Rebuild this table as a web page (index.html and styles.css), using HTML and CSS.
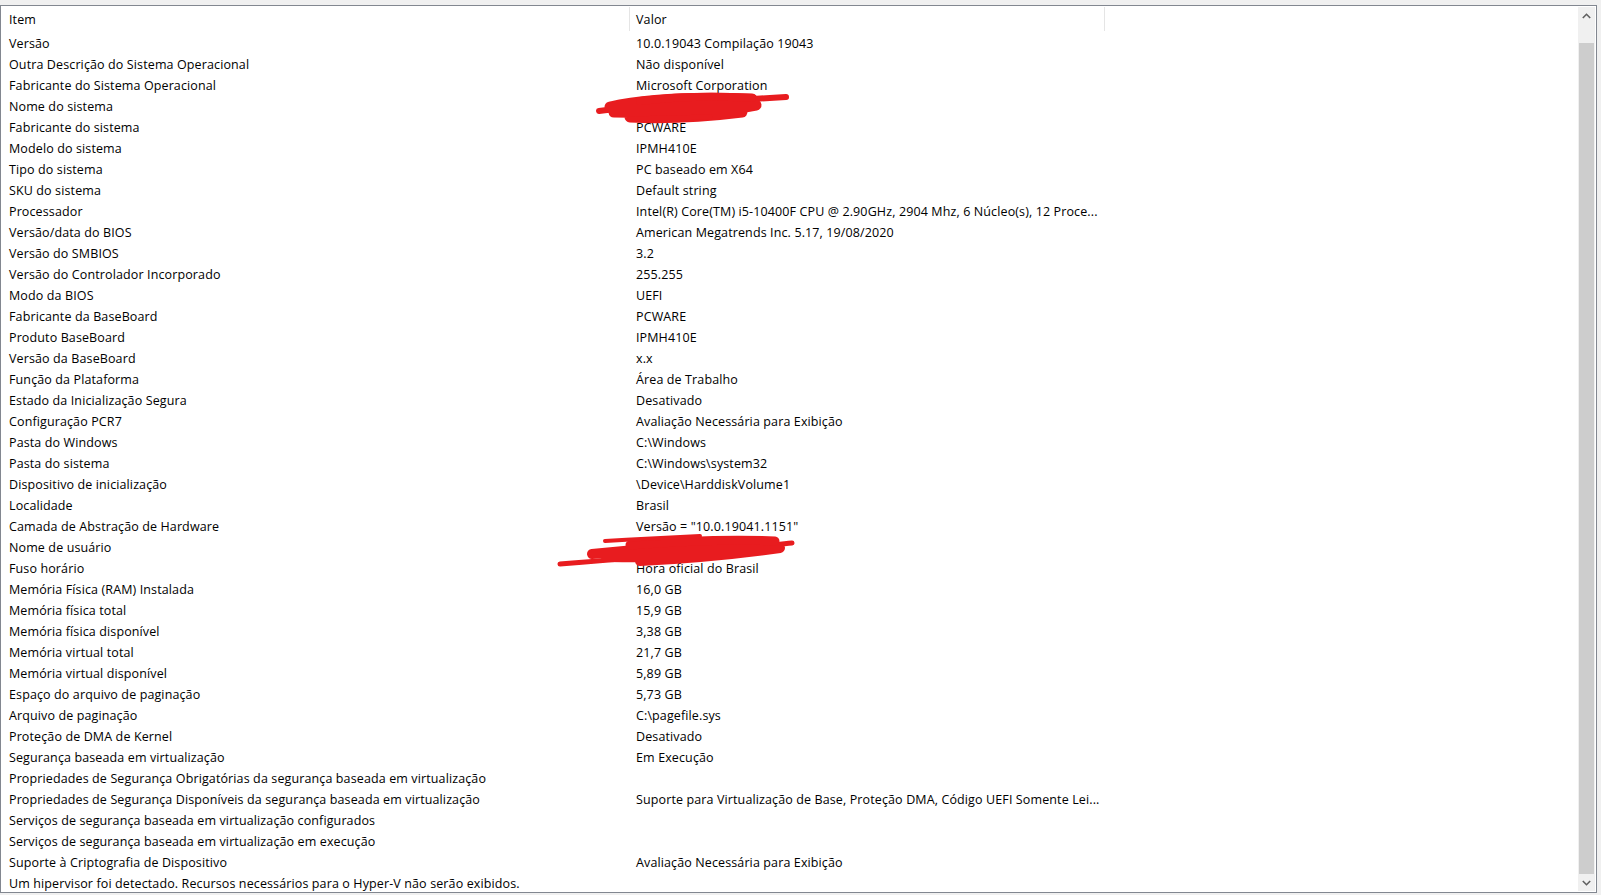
FILE: index.html
```html
<!DOCTYPE html>
<html lang="pt-BR">
<head>
    <meta charset="UTF-8">
    <meta name="viewport" content="width=device-width, initial-scale=1.0">
    <title>Informações do Sistema</title>
    <link rel="stylesheet" href="styles.css">
</head>
<body>
  <div class="window">
    <div class="list">
      <div class="row head">
        <span class="cell">Item</span>
        <span class="cell">Valor</span>
        <span class="cell"></span>
      </div>
      <div class="row"><span class="cell">Versão</span><span class="cell">10.0.19043 Compilação 19043</span></div>
      <div class="row"><span class="cell">Outra Descrição do Sistema Operacional</span><span class="cell">Não disponível</span></div>
      <div class="row"><span class="cell">Fabricante do Sistema Operacional</span><span class="cell">Microsoft Corporation</span></div>
      <div class="row"><span class="cell">Nome do sistema</span><span class="cell"></span></div>
      <div class="row"><span class="cell">Fabricante do sistema</span><span class="cell">PCWARE</span></div>
      <div class="row"><span class="cell">Modelo do sistema</span><span class="cell">IPMH410E</span></div>
      <div class="row"><span class="cell">Tipo do sistema</span><span class="cell">PC baseado em X64</span></div>
      <div class="row"><span class="cell">SKU do sistema</span><span class="cell">Default string</span></div>
      <div class="row"><span class="cell">Processador</span><span class="cell">Intel(R) Core(TM) i5-10400F CPU @ 2.90GHz, 2904 Mhz, 6 Núcleo(s), 12 Proce...</span></div>
      <div class="row"><span class="cell">Versão/data do BIOS</span><span class="cell">American Megatrends Inc. 5.17, 19/08/2020</span></div>
      <div class="row"><span class="cell">Versão do SMBIOS</span><span class="cell">3.2</span></div>
      <div class="row"><span class="cell">Versão do Controlador Incorporado</span><span class="cell">255.255</span></div>
      <div class="row"><span class="cell">Modo da BIOS</span><span class="cell">UEFI</span></div>
      <div class="row"><span class="cell">Fabricante da BaseBoard</span><span class="cell">PCWARE</span></div>
      <div class="row"><span class="cell">Produto BaseBoard</span><span class="cell">IPMH410E</span></div>
      <div class="row"><span class="cell">Versão da BaseBoard</span><span class="cell">x.x</span></div>
      <div class="row"><span class="cell">Função da Plataforma</span><span class="cell">Área de Trabalho</span></div>
      <div class="row"><span class="cell">Estado da Inicialização Segura</span><span class="cell">Desativado</span></div>
      <div class="row"><span class="cell">Configuração PCR7</span><span class="cell">Avaliação Necessária para Exibição</span></div>
      <div class="row"><span class="cell">Pasta do Windows</span><span class="cell">C:\Windows</span></div>
      <div class="row"><span class="cell">Pasta do sistema</span><span class="cell">C:\Windows\system32</span></div>
      <div class="row"><span class="cell">Dispositivo de inicialização</span><span class="cell">\Device\HarddiskVolume1</span></div>
      <div class="row"><span class="cell">Localidade</span><span class="cell">Brasil</span></div>
      <div class="row"><span class="cell">Camada de Abstração de Hardware</span><span class="cell">Versão = "10.0.19041.1151"</span></div>
      <div class="row"><span class="cell">Nome de usuário</span><span class="cell"></span></div>
      <div class="row"><span class="cell">Fuso horário</span><span class="cell">Hora oficial do Brasil</span></div>
      <div class="row"><span class="cell">Memória Física (RAM) Instalada</span><span class="cell">16,0 GB</span></div>
      <div class="row"><span class="cell">Memória física total</span><span class="cell">15,9 GB</span></div>
      <div class="row"><span class="cell">Memória física disponível</span><span class="cell">3,38 GB</span></div>
      <div class="row"><span class="cell">Memória virtual total</span><span class="cell">21,7 GB</span></div>
      <div class="row"><span class="cell">Memória virtual disponível</span><span class="cell">5,89 GB</span></div>
      <div class="row"><span class="cell">Espaço do arquivo de paginação</span><span class="cell">5,73 GB</span></div>
      <div class="row"><span class="cell">Arquivo de paginação</span><span class="cell">C:\pagefile.sys</span></div>
      <div class="row"><span class="cell">Proteção de DMA de Kernel</span><span class="cell">Desativado</span></div>
      <div class="row"><span class="cell">Segurança baseada em virtualização</span><span class="cell">Em Execução</span></div>
      <div class="row"><span class="cell">Propriedades de Segurança Obrigatórias da segurança baseada em virtualização</span><span class="cell"></span></div>
      <div class="row"><span class="cell">Propriedades de Segurança Disponíveis da segurança baseada em virtualização</span><span class="cell">Suporte para Virtualização de Base, Proteção DMA, Código UEFI Somente Lei...</span></div>
      <div class="row"><span class="cell">Serviços de segurança baseada em virtualização configurados</span><span class="cell"></span></div>
      <div class="row"><span class="cell">Serviços de segurança baseada em virtualização em execução</span><span class="cell"></span></div>
      <div class="row"><span class="cell">Suporte à Criptografia de Dispositivo</span><span class="cell">Avaliação Necessária para Exibição</span></div>
      <div class="row"><span class="cell wide">Um hipervisor foi detectado. Recursos necessários para o Hyper-V não serão exibidos.</span></div>
    </div>

    <div class="scrollbar">
      <div class="arrow">
        <svg width="9" height="6" viewBox="0 0 9 6"><polyline points="0.8,5 4.5,1.3 8.2,5" fill="none" stroke="#606060" stroke-width="1.6"/></svg>
      </div>
      <div class="track"><div class="thumb"></div></div>
      <div class="arrow">
        <svg width="9" height="6" viewBox="0 0 9 6"><polyline points="0.8,1 4.5,4.7 8.2,1" fill="none" stroke="#606060" stroke-width="1.6"/></svg>
      </div>
    </div>
  </div>

  <!-- rabiscos por cima dos dados pessoais -->
  <svg class="scribble" width="1601" height="895" viewBox="0 0 1601 895">
    <g fill="none" stroke="#e81c1f" stroke-linecap="round" stroke-linejoin="round">
      <path d="M599 111 C640 106 700 102 786 97" stroke-width="6"/>
      <path d="M610 107 C650 98 700 97 752 99 C720 104 660 106 614 112 C660 113 720 109 756 105 C720 112 670 116 630 117 C670 119 710 116 742 112" stroke-width="11"/>
      <path d="M640 101 C680 96 720 96 752 98" stroke-width="8"/>
      <path d="M630 119 L710 117" stroke-width="5"/>
    </g>
    <g fill="none" stroke="#e81c1f" stroke-linecap="round" stroke-linejoin="round">
      <path d="M560 564 C640 558 700 552 792 543" stroke-width="5"/>
      <path d="M592 554 C650 548 710 544 772 542 C720 549 660 552 606 557 C660 558 730 553 780 548 C730 555 680 559 640 561" stroke-width="10"/>
      <path d="M630 545 C680 541 730 539 775 541" stroke-width="9"/>
      <path d="M605 541 C640 539 680 537 700 536" stroke-width="4"/>
    </g>
  </svg>
</body>
</html>
```

FILE: styles.css
```css
html,
body {
    margin: 0;
    background: #f0f0f0;
}

body {
    font-family: "Open Sans", "Noto Sans", sans-serif;
    font-size: 12.5px;
    letter-spacing: 0.12px;
    color: #000;
    position: relative;
    height: 895px;
    overflow: hidden;
}

.window {
    box-sizing: border-box;
    display: flex;
    width: 1597px;
    height: 888px;
    margin-top: 5px;
    padding: 1px;
    border: 1px solid #828790;
    background: #fff;
}

.list {
    flex: 1;
    overflow: hidden;
}

.row {
    display: grid;
    grid-template-columns: 628px 475px 1fr;
    height: 21px;
    line-height: 21px;
    white-space: nowrap;
}

.cell {
    overflow: hidden;
    padding-left: 7px;
}

.cell + .cell {
    padding-left: 6px;
}

.cell.wide {
    grid-column: 1 / 4;
    overflow: visible;
}

.head {
    height: 26px;
    line-height: 26px;
}

.head .cell {
    height: 24px;
    border-right: 1px solid #e5e5e5;
}

.head .cell:last-child {
    border-right: none;
}

.scrollbar {
    display: flex;
    flex-direction: column;
    width: 17px;
    background: #f0f0f0;
}

.arrow {
    height: 17px;
    display: flex;
    align-items: center;
    justify-content: center;
}

.track {
    flex: 1;
    display: flex;
    flex-direction: column;
    padding-top: 19px;
}

.thumb {
    flex: 1;
    margin: 0 1px;
    background: #cdcdcd;
}

.scribble {
    position: absolute;
    top: 0;
    left: 0;
    pointer-events: none;
}
```
